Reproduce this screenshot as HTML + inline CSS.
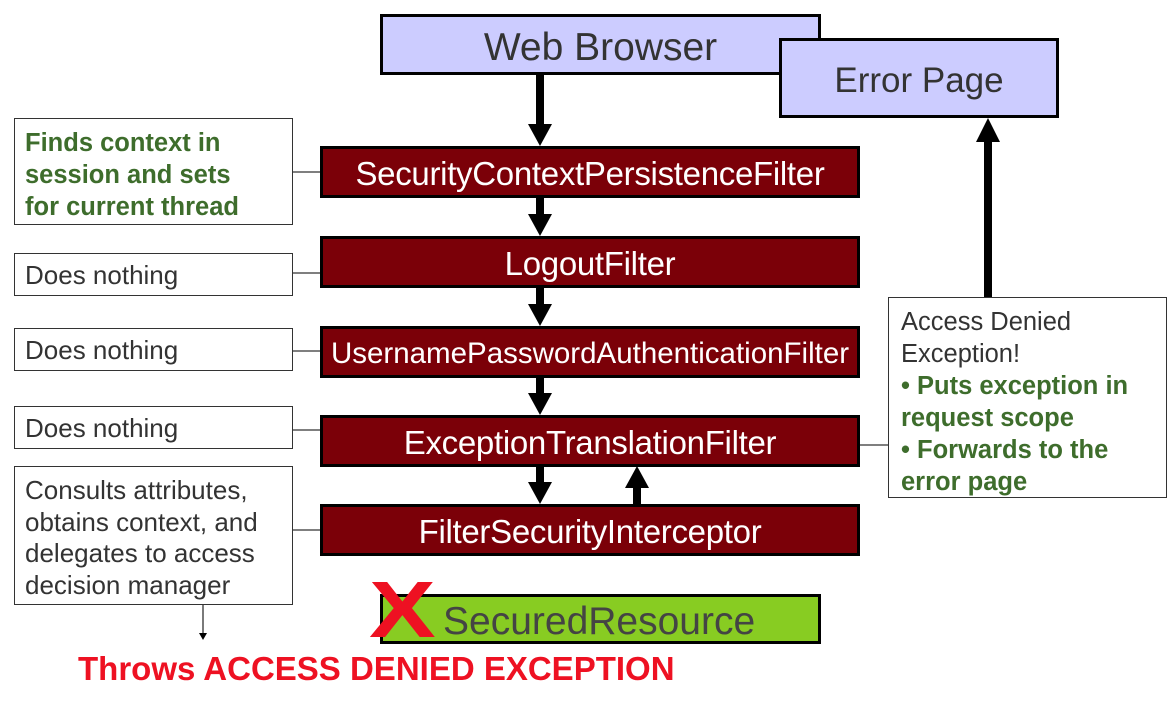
<!DOCTYPE html>
<html><head><meta charset="utf-8"><style>
body{margin:0;width:1174px;height:704px;background:#fff;position:relative;overflow:hidden;font-family:"Liberation Sans",sans-serif}
.a{position:absolute;box-sizing:border-box}
.lav{background:#ccccff;border:3px solid #000;color:#333;text-align:center}
.f{background:#7b0008;border:3px solid #000;color:#fff;text-align:center;font-size:33px;letter-spacing:-0.3px;left:320px;width:540px;height:52px;line-height:50px;white-space:nowrap}
.n{background:#fff;border:1.5px solid #333;color:#333;font-size:26px;padding-left:10px;left:14px;width:279px;white-space:nowrap}
.g{color:#3e6d2c;font-weight:bold}
</style></head><body>
<svg class="a" style="left:0;top:0" width="1174" height="704">
<g fill="#000">
<rect x="536" y="74" width="8" height="52"/><polygon points="528,124 552,124 540,146"/>
<rect x="536" y="197" width="8" height="20"/><polygon points="528,214 552,214 540,236"/>
<rect x="536" y="287" width="8" height="20"/><polygon points="528,304 552,304 540,326"/>
<rect x="536" y="377" width="8" height="20"/><polygon points="528,393 552,393 540,415"/>
<rect x="536" y="466" width="8" height="20"/><polygon points="528,482 552,482 540,504"/>
<rect x="633" y="486" width="8" height="18"/><polygon points="625,488 649,488 637,466"/>
<rect x="984" y="140" width="8" height="158"/><polygon points="976,142 1000,142 988,118"/>
</g>
<g stroke="#333" stroke-width="1.3">
<line x1="293" y1="172" x2="320" y2="172"/>
<line x1="293" y1="273" x2="320" y2="273"/>
<line x1="293" y1="351" x2="320" y2="351"/>
<line x1="293" y1="430" x2="320" y2="430"/>
<line x1="293" y1="530" x2="320" y2="530"/>
<line x1="860" y1="445" x2="888" y2="445"/>
<line x1="203" y1="604" x2="203" y2="636"/>
</g>
<polygon points="199,633 207,633 203,640" fill="#000"/>
</svg>
<div class="a lav" style="left:380px;top:14px;width:441px;height:61px;font-size:39px;line-height:62px">Web Browser</div>
<div class="a lav" style="left:779px;top:38px;width:280px;height:80px;font-size:35px;line-height:80px">Error Page</div>
<div class="a f" style="top:146px">SecurityContextPersistenceFilter</div>
<div class="a f" style="top:236px">LogoutFilter</div>
<div class="a f" style="top:326px;font-size:29.5px;letter-spacing:0">UsernamePasswordAuthenticationFilter</div>
<div class="a f" style="top:415px">ExceptionTranslationFilter</div>
<div class="a f" style="top:504px">FilterSecurityInterceptor</div>
<div class="a n g" style="top:118px;height:107px;line-height:32px;padding-top:8px;font-size:25.5px">Finds context in<br>session and sets<br>for current thread</div>
<div class="a n" style="top:253px;height:43px;line-height:42px">Does nothing</div>
<div class="a n" style="top:328px;height:43px;line-height:42px">Does nothing</div>
<div class="a n" style="top:406px;height:43px;line-height:42px">Does nothing</div>
<div class="a n" style="top:466px;height:139px;line-height:31.5px;padding-top:8px">Consults attributes,<br>obtains context, and<br>delegates to access<br>decision manager</div>
<div class="a" style="left:888px;top:297px;width:279px;height:201px;border:1.5px solid #333;background:#fff;font-size:25.5px;line-height:32px;padding:8px 0 0 12px;color:#333;white-space:nowrap">Access Denied<br>Exception!<br><span class="g">• Puts exception in<br>request scope<br>• Forwards to the<br>error page</span></div>
<div class="a" style="left:380px;top:594px;width:441px;height:50px;background:#88cc22;border:3px solid #000;color:#444;font-size:39px;line-height:50px;padding-left:60px;white-space:nowrap">SecuredResource</div>
<div class="a" style="left:369px;top:570px;color:#ee1122;font-size:80px;font-weight:bold;line-height:80px;transform:scaleX(1.25);transform-origin:0 0">X</div>
<div class="a" style="left:78px;top:650px;color:#ee1122;font-size:33px;font-weight:bold;line-height:38px;white-space:nowrap">Throws ACCESS DENIED EXCEPTION</div>
</body></html>
